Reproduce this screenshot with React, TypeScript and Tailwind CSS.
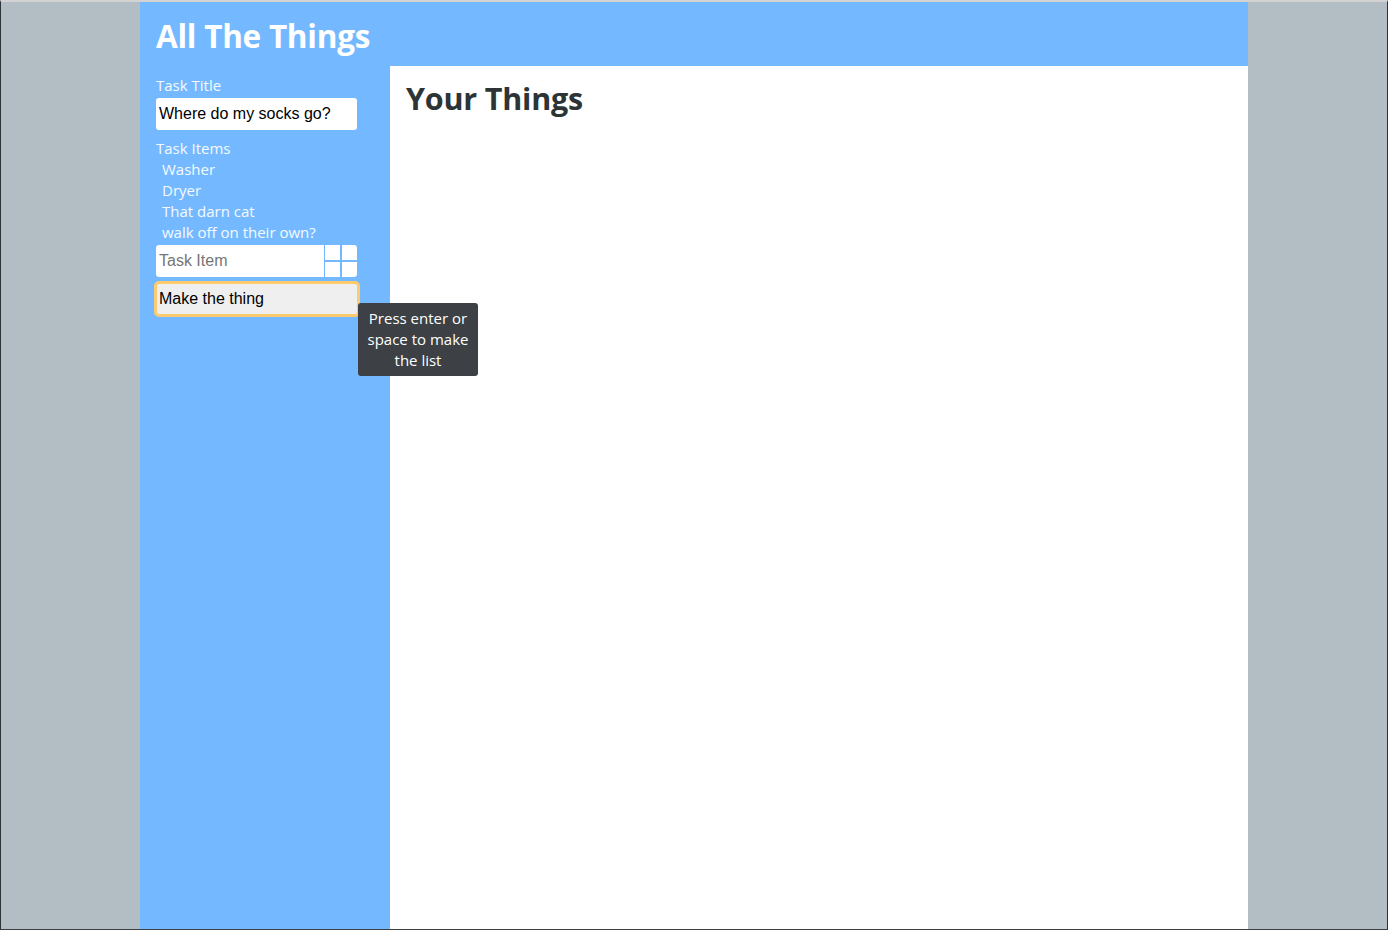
import React from 'react';

const items = ['Washer', 'Dryer', 'That darn cat', 'walk off on their own?'];

function PlusButton() {
  return (
    <button
      type="button"
      className="ml-px flex h-8 w-8 items-center justify-center overflow-hidden rounded-r-[3px] bg-white p-0"
    >
      <svg width="32" height="32" viewBox="0 0 32 32">
        <line x1="16" y1="0" x2="16" y2="32" stroke="#74b9ff" strokeWidth="2" />
        <line x1="0" y1="16" x2="32" y2="16" stroke="#74b9ff" strokeWidth="2" />
      </svg>
    </button>
  );
}

export default function App() {
  return (
    <div
      className="flex min-h-[930px] justify-center border-t-2 border-r border-b border-l border-t-[#d3d3d3] border-r-[#2d3436] border-b-[#3a3f42] border-l-[#2d3436] bg-[#b2bec3]"
      style={{ fontFamily: '"Open Sans", "Noto Sans", sans-serif' }}
    >
      <div className="flex w-[1108px] flex-col">
        {/* Header */}
        <header className="flex h-16 items-center bg-[#74b9ff] px-4 pt-[4px]">
          <h1 className="text-[31.5px] leading-none font-bold tracking-[-0.25px] text-white">All The Things</h1>
        </header>

        <div className="flex flex-1">
          {/* Sidebar form */}
          <aside className="w-[250px] bg-[#74b9ff] px-4 pt-[9px] text-[15px] leading-[21px] text-[#f5faff]">
            <label className="block">Task Title</label>
            <input
              className="mt-[2px] block h-8 w-[201px] rounded-[3px] bg-white px-[3px] text-[16px] text-black outline-none"
              style={{ fontFamily: '"Liberation Sans", Arial, sans-serif' }}
              defaultValue="Where do my socks go?"
            />

            <div className="mt-2">Task Items</div>
            <ul className="pl-[6px]">
              {items.map((item) => (
                <li key={item}>{item}</li>
              ))}
            </ul>

            <div className="mt-[2px] flex w-[201px]">
              <input
                className="h-8 w-[168px] rounded-l-[3px] bg-white px-[3px] text-[16px] text-black outline-none placeholder:text-[#757575]"
                style={{ fontFamily: '"Liberation Sans", Arial, sans-serif' }}
                placeholder="Task Item"
              />
              <PlusButton />
            </div>

            <div className="relative mt-1 -ml-[2px] w-[206px]">
              <button
                type="button"
                className="block h-9 w-full rounded-[5px] border-[3px] border-[#fdcb6e] bg-[#efefef] px-[2px] pb-[2px] text-left text-[16px] text-black"
                style={{ fontFamily: '"Liberation Sans", Arial, sans-serif' }}
              >
                Make the thing
              </button>
              {/* Tooltip */}
              <div className="absolute top-[22px] left-[204px] z-10 w-[120px] rounded-[3px] bg-[#3d4145] px-2 py-[5px] text-center text-[15px] leading-[21px] text-white">
                Press enter or space to make the list
              </div>
            </div>
          </aside>

          {/* Content */}
          <main className="flex-1 bg-white px-4 pt-[13px]">
            <h2 className="text-[30.5px] leading-[38px] font-bold tracking-[-0.2px] text-[#2d3436]">Your Things</h2>
          </main>
        </div>
      </div>
    </div>
  );
}
